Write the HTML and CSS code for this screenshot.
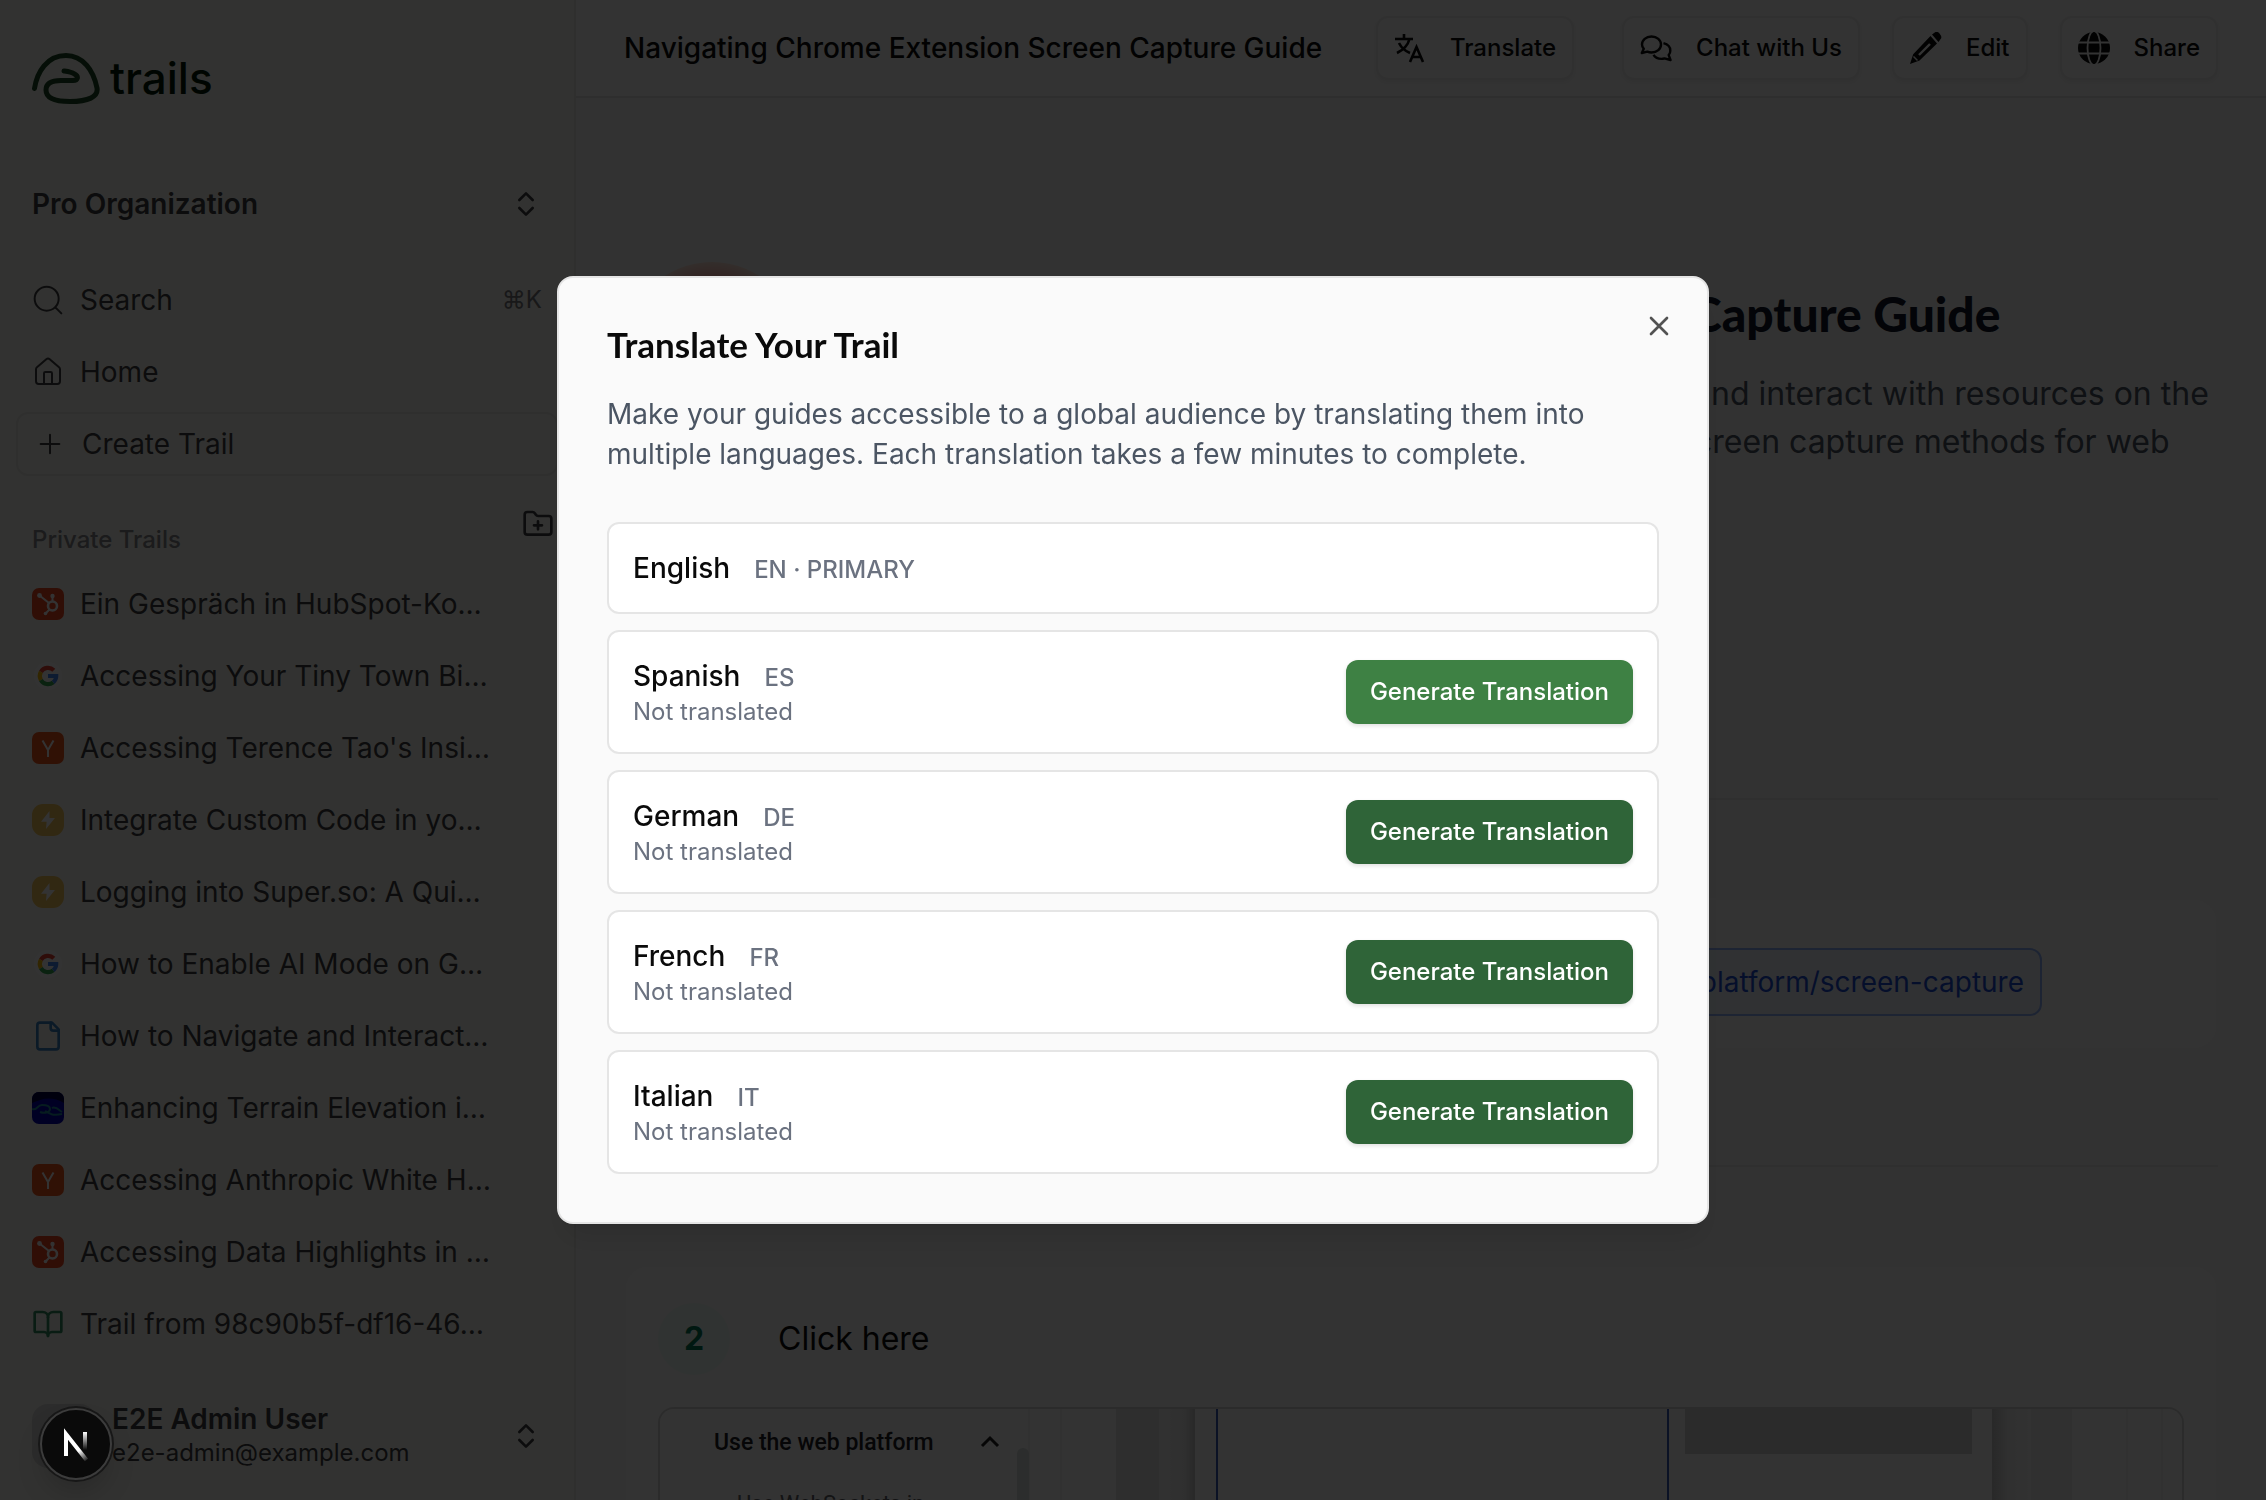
FILE: index.html
```html
<!DOCTYPE html>
<html lang="en">
<head>
  <meta charset="UTF-8">
  <meta name="viewport" content="width=device-width, initial-scale=1.0">
  <title>Navigating Chrome Extension Screen Capture Guide - Trails</title>
  <link rel="stylesheet" href="styles.css">
</head>
<body>
  <!-- shared icons -->
  <svg class="sprite" aria-hidden="true">
    <symbol id="chevrons" viewBox="0 0 24 24"><path d="m7 15 5 5 5-5M7 9l5-5 5 5"/></symbol>
    <symbol id="hubspot" viewBox="0 0 32 32">
      <rect width="32" height="32" rx="7" fill="#f0451f"/>
      <g fill="none" stroke="#fff" stroke-width="2">
        <circle cx="20.500" cy="18" r="4.500" stroke-width="2.600"/>
        <path d="M20.500 13V8M17 15 7.500 7.500M17.500 21.500 14 25"/>
      </g>
      <g fill="#fff"><circle cx="20.500" cy="8" r="2.200"/><circle cx="7.500" cy="7.500" r="2.400"/><circle cx="13.500" cy="25.500" r="1.800"/></g>
    </symbol>
    <symbol id="google" viewBox="0 0 32 32">
      <circle cx="16" cy="16" r="14" fill="#fff"/>
      <g fill="none" stroke-width="4.200">
        <path d="M21.800 10.200A8.200 8.200 0 0 0 8.900 11.900" stroke="#ea4335"/>
        <path d="M8.900 11.900a8.200 8.200 0 0 0 0 8.200" stroke="#fbbc05"/>
        <path d="M8.900 20.100a8.200 8.200 0 0 0 12.300 2.200" stroke="#34a853"/>
        <path d="M21.200 22.300A8.200 8.200 0 0 0 24.200 16H16" stroke="#4285f4"/>
      </g>
    </symbol>
    <symbol id="ycombinator" viewBox="0 0 32 32">
      <rect width="32" height="32" rx="7" fill="#f0561d"/>
      <path d="m10.500 8.500 5.500 9.500 5.500-9.500M16 18v7" fill="none" stroke="#fff" stroke-width="2"/>
    </symbol>
    <symbol id="super" viewBox="0 0 32 32">
      <rect width="32" height="32" rx="11" fill="#f5c55a"/>
      <path d="M17.500 7 9 17.800h5.600L14 25l9-11h-5.500z" fill="#fff"/>
    </symbol>
  </svg>

  <div class="app">
    <aside class="sidebar">
      <a class="logo" href="#">
        <svg width="68" height="52" viewBox="0 0 68 52" fill="none" stroke="#1b4724" stroke-width="5" stroke-linecap="round" stroke-linejoin="round">
          <path d="M2.500 36.500C5 20 15 3.500 34 3.500c17 0 27.500 15 31 32.500 1.500 9-9 13.500-27 13.500-15 0-24-4-24-11.500 0-8 7-9.500 15-9.500h12c5 0 6-4 1.500-6.500-3-2-7-2.500-10.500-3"/>
        </svg>
        <span>trails</span>
      </a>

      <button class="row org"><strong>Pro Organization</strong><svg class="icon"><use href="#chevrons"/></svg></button>

      <nav class="nav">
        <a class="row" href="#">
          <svg class="icon" viewBox="0 0 24 24"><circle cx="11" cy="11" r="9"/><path d="m22 22-4.300-4.300"/></svg>
          <span>Search</span><kbd>⌘K</kbd>
        </a>
        <a class="row" href="#">
          <svg class="icon" viewBox="0 0 24 24"><path d="M15 21v-8a1 1 0 0 0-1-1h-4a1 1 0 0 0-1 1v8"/><path d="M3 10a2 2 0 0 1 .709-1.528l7-6a2 2 0 0 1 2.582 0l7 6A2 2 0 0 1 21 10v9a2 2 0 0 1-2 2H5a2 2 0 0 1-2-2z"/></svg>
          <span>Home</span>
        </a>
        <button class="row create">
          <svg class="icon" viewBox="0 0 24 24"><path d="M5 12h14M12 5v14"/></svg>
          <span>Create Trail</span>
        </button>
      </nav>

      <div class="section-head">
        <h2>Private Trails</h2>
        <button class="new-folder" aria-label="New folder">
          <svg class="icon" viewBox="0 0 24 24"><path d="M12 10v6M9 13h6"/><path d="M20 20a2 2 0 0 0 2-2V8a2 2 0 0 0-2-2h-7.900a2 2 0 0 1-1.690-.9L9.600 3.900A2 2 0 0 0 7.930 3H4a2 2 0 0 0-2 2v13a2 2 0 0 0 2 2Z"/></svg>
        </button>
      </div>

      <nav class="nav trails">
        <a class="row" href="#"><svg class="favicon"><use href="#hubspot"/></svg><span>Ein Gespräch in HubSpot-Ko…</span></a>
        <a class="row" href="#"><svg class="favicon"><use href="#google"/></svg><span>Accessing Your Tiny Town Bi…</span></a>
        <a class="row" href="#"><svg class="favicon"><use href="#ycombinator"/></svg><span>Accessing Terence Tao's Insi…</span></a>
        <a class="row" href="#"><svg class="favicon"><use href="#super"/></svg><span>Integrate Custom Code in yo…</span></a>
        <a class="row" href="#"><svg class="favicon"><use href="#super"/></svg><span>Logging into Super.so: A Qui…</span></a>
        <a class="row" href="#"><svg class="favicon"><use href="#google"/></svg><span>How to Enable AI Mode on G…</span></a>
        <a class="row" href="#">
          <svg class="icon file" viewBox="0 0 24 24"><path d="M15 2H6a2 2 0 0 0-2 2v16a2 2 0 0 0 2 2h12a2 2 0 0 0 2-2V7Z"/><path d="M14 2v4a2 2 0 0 0 2 2h4"/></svg>
          <span>How to Navigate and Interact…</span>
        </a>
        <a class="row" href="#">
          <svg class="favicon" viewBox="0 0 32 32">
            <rect width="32" height="32" rx="7" fill="#0000b4"/>
            <path d="M0 7a7 7 0 0 1 7-7h18a7 7 0 0 1 7 7v4Q20 4 8 8T0 12z" fill="#000040"/>
            <path d="M0 17c5 2 5-4 10-4s8 1 8 4-5 5-10 3M13 19c5 3 8 5 17 3M20 16c4-2 7 2 10 4" fill="none" stroke="#1f8a9c" stroke-width="2"/>
          </svg>
          <span>Enhancing Terrain Elevation i…</span>
        </a>
        <a class="row" href="#"><svg class="favicon"><use href="#ycombinator"/></svg><span>Accessing Anthropic White H…</span></a>
        <a class="row" href="#"><svg class="favicon"><use href="#hubspot"/></svg><span>Accessing Data Highlights in …</span></a>
        <a class="row" href="#">
          <svg class="icon book" viewBox="0 0 24 24"><path d="M12 7v14"/><path d="M3 18a1 1 0 0 1-1-1V4a1 1 0 0 1 1-1h5a4 4 0 0 1 4 4 4 4 0 0 1 4-4h5a1 1 0 0 1 1 1v13a1 1 0 0 1-1 1h-6a3 3 0 0 0-3 3 3 3 0 0 0-3-3z"/></svg>
          <span>Trail from 98c90b5f-df16-46…</span>
        </a>
      </nav>

      <button class="user">
        <span class="avatar"></span>
        <span class="user-text"><strong>E2E Admin User</strong><small>e2e-admin@example.com</small></span>
        <svg class="icon"><use href="#chevrons"/></svg>
      </button>
    </aside>

    <main class="main">
      <header class="topbar">
        <h1>Navigating Chrome Extension Screen Capture Guide</h1>
        <div class="actions">
          <button class="btn-outline translate">
            <svg viewBox="0 0 32 32" fill="none" stroke="currentColor" stroke-width="2.600"><path d="M1 7h18M10 2v5M15.500 7C14 13 9 18 3 21M5 11c2 4 6 8 11 10M16 30l6.500-15L29 30M18.500 25h8"/></svg>
            <span>Translate</span>
          </button>
          <button class="btn-outline">
            <svg viewBox="0 0 32 32" fill="none" stroke="currentColor" stroke-width="2.400" stroke-linejoin="round"><path d="M11.500 4.500c5.500 0 9.500 3.500 9.500 8s-4 8-9.500 8c-1.500 0-3-.3-4.200-.8L1.800 21l2-4.200C2.500 15.500 2 14 2 12.500c0-4.500 4-8 9.500-8zM23.500 11.200c4 1 6.800 4 6.800 7.500 0 1.800-.6 3.200-1.600 4.400L30.500 28l-6-1.600c-1 .3-2 .5-3 .5-3.500 0-6.500-1.600-8-4"/></svg>
            <span>Chat with Us</span>
          </button>
          <button class="btn-outline">
            <svg viewBox="0 0 32 32" fill="currentColor"><path d="M22 2.500 25.500 0q2-.8 4 1.500t1.800 4.500L28.500 10zM20.500 4 27 11.500 9.500 28.500 0 32l3.200-9.800z"/><path d="M9 23 20 12" stroke="#fff" stroke-width="2.400"/><path d="M3.500 24.500 7.500 28.500" stroke="#fff" stroke-width="1.500"/></svg>
            <span>Edit</span>
          </button>
          <button class="btn-outline">
            <svg viewBox="0 0 32 32"><circle cx="16" cy="16" r="16" fill="currentColor"/><g fill="none" stroke="#fff" stroke-width="1.800"><ellipse cx="16" cy="16" rx="6.500" ry="17"/><path d="M0 10.500h32M0 21.500h32"/></g></svg>
            <span>Share</span>
          </button>
        </div>
      </header>

      <section class="hero">
        <div class="hero-icon"></div>
        <div class="hero-text">
          <h2>Capture Guide</h2>
          <p>find and interact with resources on the for screen capture methods for web</p>
        </div>
      </section>

      <hr>
      <section class="step step-link">
        <a href="#">web-platform/screen-capture</a>
      </section>

      <hr>
      <section class="step">
        <div class="step-head"><span class="step-number">2</span><p>Click here</p></div>
        <div class="shot">
          <svg viewBox="0 0 1522 400" preserveAspectRatio="xMinYMin slice">
            <defs>
              <linearGradient id="fadeIn"><stop offset="0" stop-color="#f6f6f6"/><stop offset=".7" stop-color="#ececec"/><stop offset="1" stop-color="#c9c9c9"/></linearGradient>
              <linearGradient id="fadeOut"><stop offset="0" stop-color="#c9c9c9"/><stop offset=".4" stop-color="#eeeeee"/><stop offset="1" stop-color="#f8f8f8"/></linearGradient>
            </defs>
            <rect width="1522" height="400" fill="#fdfdfd"/>
            <path d="M369 0v400M401 0v400M1467 0v400M1502 0v400" stroke="#f2f2f2" stroke-width="2"/>
            <rect x="357" y="39" width="12" height="400" rx="6" fill="#dadfde"/>
            <rect x="456" width="43" height="400" fill="#e6e6e6"/>
            <rect x="499" width="36" height="400" fill="url(#fadeIn)"/>
            <rect x="535" width="797" height="400" fill="#fff"/>
            <path d="M557 0v400M1008 0v400" stroke="#3a5bb8" stroke-width="2"/>
            <rect x="1025" width="287" height="45" fill="#d8d8d8"/>
            <rect x="1332" width="39" height="400" fill="url(#fadeOut)"/>
            <rect x="1371" width="41" height="400" fill="#f0f0f0"/>
            <path d="m322 37 8-8 8 8" fill="none" stroke="#222" stroke-width="3"/>
            <text x="54" y="41" class="shot-title">Use the web platform</text>
            <text x="77" y="102" class="shot-item">Use WebSockets in</text>
          </svg>
        </div>
      </section>
    </main>
  </div>

  <div class="overlay">
    <div class="modal" role="dialog" aria-labelledby="modal-title">
      <button class="close" aria-label="Close"><svg class="icon" viewBox="0 0 24 24"><path d="M18 6 6 18M6 6l12 12"/></svg></button>
      <h2 id="modal-title">Translate Your Trail</h2>
      <p class="modal-desc">Make your guides accessible to a global audience by translating them into multiple languages. Each translation takes a few minutes to complete.</p>
      <ul class="languages">
        <li class="language">
          <div><span class="name">English</span><span class="code">EN · PRIMARY</span></div>
        </li>
        <li class="language">
          <div><span class="name">Spanish</span><span class="code">ES</span><p>Not translated</p></div>
          <button class="btn-green hovered">Generate Translation</button>
        </li>
        <li class="language">
          <div><span class="name">German</span><span class="code">DE</span><p>Not translated</p></div>
          <button class="btn-green">Generate Translation</button>
        </li>
        <li class="language">
          <div><span class="name">French</span><span class="code">FR</span><p>Not translated</p></div>
          <button class="btn-green">Generate Translation</button>
        </li>
        <li class="language">
          <div><span class="name">Italian</span><span class="code">IT</span><p>Not translated</p></div>
          <button class="btn-green">Generate Translation</button>
        </li>
      </ul>
    </div>
  </div>

  <button class="dev-badge" aria-label="Open dev tools">
    <svg width="40" height="40" viewBox="0 0 40 40" fill="none" stroke-width="4">
      <defs>
        <linearGradient id="bar" x1="0" y1="8" x2="0" y2="26" gradientUnits="userSpaceOnUse"><stop stop-color="#fff"/><stop offset="1" stop-color="#fff" stop-opacity="0"/></linearGradient>
        <linearGradient id="leg" x1="24" y1="26" x2="32" y2="37" gradientUnits="userSpaceOnUse"><stop stop-color="#fff"/><stop offset="1" stop-color="#fff" stop-opacity="0"/></linearGradient>
      </defs>
      <path d="M29 8v18" stroke="url(#bar)"/>
      <path d="M10 32V10l20.500 26" stroke="url(#leg)"/>
    </svg>
  </button>
</body>
</html>
```
FILE: styles.css
```css
* {
  box-sizing: border-box;
}
body {
  margin: 0;
  font-family: Inter, sans-serif;
  font-size: 28px;
  line-height: 40px;
  color: #0a0a0a;
  background: #fafafa;
}
h1, h2, p, ul {
  margin: 0;
  padding: 0;
}
button {
  font: inherit;
  color: inherit;
  background: none;
  border: none;
  padding: 0;
  cursor: pointer;
}
a {
  color: inherit;
  text-decoration: none;
}
strong {
  font-weight: 600;
}
.sprite {
  display: none;
}
.icon, .favicon {
  width: 32px;
  height: 32px;
  flex-shrink: 0;
}
.icon {
  fill: none;
  stroke: currentColor;
  stroke-width: 2;
  stroke-linecap: round;
  stroke-linejoin: round;
}
.app {
  display: flex;
  height: 100vh;
  overflow: hidden;
}

/* sidebar */
.sidebar {
  width: 576px;
  flex-shrink: 0;
  display: flex;
  flex-direction: column;
  padding: 52px 16px 30px;
  background: #fafaf3;
  border-right: 2px solid #e8e8e6;
  color: #3f3f42;
}
.logo {
  display: flex;
  align-items: center;
  gap: 10px;
  padding: 0 16px;
  margin-bottom: 68px;
  font-size: 44px;
  line-height: 52px;
  font-weight: 500;
  color: #041c06;
}
.row {
  display: flex;
  align-items: center;
  gap: 16px;
  width: 100%;
  height: 64px;
  padding: 0 16px;
  border-radius: 12px;
  text-align: left;
  white-space: nowrap;
}
.row .icon {
  stroke-width: 1.5;
}
.org {
  justify-content: space-between;
  margin-bottom: 32px;
}
.row.org .icon {
  stroke-width: 2;
}
.nav {
  display: flex;
  flex-direction: column;
  gap: 8px;
}
.row kbd {
  margin-left: auto;
  font-family: inherit;
  font-size: 24px;
  color: #77777c;
}
.create {
  border: 2px solid #e8e8e6;
}
.section-head {
  display: flex;
  justify-content: space-between;
  align-items: flex-end;
  height: 52px;
  margin: 32px 0 12px;
  padding: 0 4px 0 16px;
}
.section-head h2 {
  font-size: 24px;
  font-weight: 500;
  color: #85858a;
}
.new-folder {
  align-self: flex-start;
  height: 32px;
}
.new-folder .icon {
  display: block;
}
.row .file {
  color: #3b82c4;
  stroke-width: 2;
}
.row .book {
  color: #2f8a5f;
  stroke-width: 2;
}
.user {
  display: flex;
  align-items: center;
  gap: 16px;
  margin-top: auto;
  padding: 0 16px;
  text-align: left;
}
.avatar {
  width: 64px;
  height: 64px;
  border-radius: 16px;
  background: #dcdcdc;
}
.user-text {
  display: flex;
  flex-direction: column;
  flex: 1;
  line-height: 34px;
}
.user small {
  font-size: 24px;
}

/* main column */
.main {
  flex: 1;
  min-width: 0;
  overflow: hidden;
}
.topbar {
  display: flex;
  align-items: center;
  justify-content: space-between;
  height: 98px;
  padding: 0 48px;
  background: #fdfdfd;
  border-bottom: 2px solid #e5e5e5;
}
.topbar h1 {
  font-size: 28px;
  font-weight: 500;
  white-space: nowrap;
}
.actions {
  display: flex;
  gap: 32px;
}
.btn-outline {
  display: flex;
  align-items: center;
  gap: 24px;
  height: 64px;
  padding: 0 16px;
  border: 2px solid #ededed;
  border-radius: 12px;
  box-shadow: 0 2px 4px rgba(0, 0, 0, 0.05);
  font-size: 24px;
  font-weight: 500;
  white-space: nowrap;
}
.btn-outline svg {
  width: 32px;
  height: 32px;
}
.translate {
  margin-right: 16px;
}
.hero {
  display: flex;
  justify-content: space-between;
  height: 700px;
  padding: 164px 48px 0;
}
.hero-icon {
  width: 176px;
  height: 176px;
  border-radius: 50%;
  background: radial-gradient(circle closest-side, #f87171 60%, #ffe4d8 100%);
}
.hero-text {
  width: 592px;
  padding-top: 22px;
}
.hero-text h2 {
  margin-bottom: 26px;
  padding-left: 64px;
  font-family: Lato, sans-serif;
  font-size: 48px;
  line-height: 60px;
  font-weight: 900;
  color: #101828;
}
.hero-text p {
  font-size: 32px;
  line-height: 48px;
  color: #4b5563;
}
hr {
  height: 2px;
  margin: 0 48px 98px;
  border: none;
  background: #ebebeb;
}
.step {
  margin: 0 48px;
  padding: 36px 32px;
  border: 2px solid #fbfbfb;
  border-radius: 24px;
  background: #fdfdfd;
}
.step-link {
  display: flex;
  justify-content: flex-end;
  margin-bottom: 115px;
  padding: 48px 174px 32px;
}
.step-link a {
  padding: 12px 16px;
  border: 2px solid #93b4fd;
  border-radius: 12px;
  background: #eff6ff;
  color: #1d4ed8;
}
.step-head {
  display: flex;
  align-items: center;
  gap: 48px;
  margin-bottom: 32px;
  font-size: 32px;
}
.step-number {
  display: grid;
  place-items: center;
  width: 72px;
  height: 72px;
  border-radius: 50%;
  background: #f0fdf7;
  font-weight: 700;
  color: #047857;
}
.shot {
  overflow: hidden;
  border: 2px solid #d8d8d8;
  border-radius: 16px;
}
.shot svg {
  display: block;
  width: 100%;
}
.shot-title, .shot-item {
  font-family: Roboto, sans-serif;
  font-size: 22px;
  fill: #202124;
}
.shot-title {
  font-size: 23px;
  font-weight: 500;
}
.shot-item {
  fill: #5f6368;
}

/* translate dialog */
.overlay {
  position: fixed;
  inset: 0;
  display: grid;
  place-items: center;
  background: rgba(0, 0, 0, 0.8);
}
.modal {
  position: relative;
  width: 1152px;
  max-width: 100%;
  padding: 48px;
  background: #fafafa;
  border: 2px solid #e5e5e5;
  border-radius: 16px;
  box-shadow: 0 20px 30px -6px rgba(0, 0, 0, 0.1), 0 8px 12px -8px rgba(0, 0, 0, 0.1);
}
.modal h2 {
  margin-bottom: 32px;
  font-family: Lato, sans-serif;
  font-size: 35px;
  line-height: 36px;
  font-weight: 700;
}
.modal-desc {
  margin-bottom: 48px;
  color: #4b5563;
}
.close {
  position: absolute;
  top: 32px;
  right: 32px;
  height: 32px;
  color: #525252;
}
.close .icon {
  display: block;
}
.languages {
  display: flex;
  flex-direction: column;
  gap: 16px;
  list-style: none;
}
.language {
  display: flex;
  align-items: center;
  justify-content: space-between;
  padding: 24px;
  background: #fff;
  border: 2px solid #e5e5e5;
  border-radius: 12px;
}
.name {
  margin-right: 24px;
  font-weight: 500;
}
.code {
  font-size: 24px;
  line-height: 24px;
  font-weight: 500;
  color: #6b7280;
}
.language p {
  font-size: 24px;
  line-height: 32px;
  color: #6b7280;
}
.btn-green {
  height: 64px;
  padding: 0 24px;
  border-radius: 12px;
  background: #2f6438;
  box-shadow: 0 2px 4px rgba(0, 0, 0, 0.12);
  color: #fff;
  font-size: 24px;
  font-weight: 500;
}
.btn-green:hover, .btn-green.hovered {
  background: #3e8144;
}

.dev-badge {
  position: fixed;
  left: 40px;
  bottom: 20px;
  display: grid;
  place-items: center;
  width: 72px;
  height: 72px;
  border: 2px solid #3c3c3c;
  border-radius: 50%;
  background: #0a0a0a;
  box-shadow: 0 0 0 2px #171717, 0 16px 32px -8px rgba(0, 0, 0, 0.24);
}
```
